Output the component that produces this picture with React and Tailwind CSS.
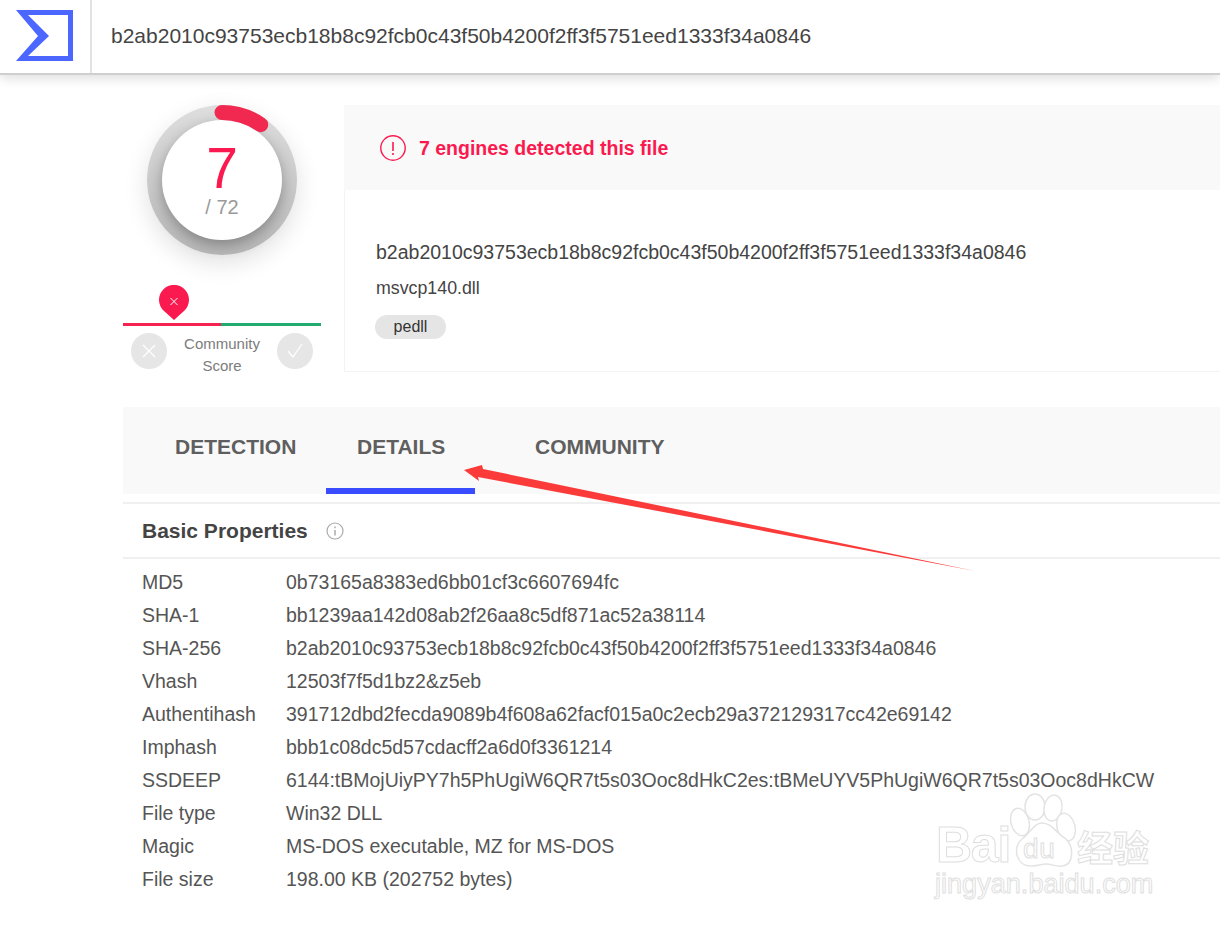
/**
 * File report page - hash header, detection score and basic properties
 */
const HASH = 'b2ab2010c93753ecb18b8c92fcb0c43f50b4200f2ff3f5751eed1333f34a0846';

const PROPERTIES = [
  ['MD5', '0b73165a8383ed6bb01cf3c6607694fc'],
  ['SHA-1', 'bb1239aa142d08ab2f26aa8c5df871ac52a38114'],
  ['SHA-256', HASH],
  ['Vhash', '12503f7f5d1bz2&z5eb'],
  ['Authentihash', '391712dbd2fecda9089b4f608a62facf015a0c2ecb29a372129317cc42e69142'],
  ['Imphash', 'bbb1c08dc5d57cdacff2a6d0f3361214'],
  ['SSDEEP', '6144:tBMojUiyPY7h5PhUgiW6QR7t5s03Ooc8dHkC2es:tBMeUYV5PhUgiW6QR7t5s03Ooc8dHkCW'],
  ['File type', 'Win32 DLL'],
  ['Magic', 'MS-DOS executable, MZ for MS-DOS'],
  ['File size', '198.00 KB (202752 bytes)'],
];

const Header = () => (
  <header className="h-[75px] flex bg-white border-b-2 border-[#cfcfcf] shadow-[0_4px_10px_rgba(0,0,0,0.12)] relative">
    <div className="w-[92px] shrink-0 border-r-2 border-[#e2e2e2] flex items-center pl-4 pb-[2px]">
      <svg width="57" height="51" viewBox="0 0 57 51">
        <path fillRule="evenodd" d="M0 0H57V51H0L22 26ZM12 5L33 26L12 46H52V5Z" fill="#4b67ff" />
      </svg>
    </div>
    <div className="pl-[19px] pb-[1px] flex items-center text-[21px] text-[#444]">{HASH}</div>
  </header>
);

const ScoreGauge = () => (
  <div className="w-[150px] h-[150px] rounded-full relative bg-gradient-to-b from-[#dedede] to-[#b8b8b8] shadow-[0_8px_24px_rgba(0,0,0,0.12)] flex items-center justify-center">
    <div className="relative w-[120px] h-[120px] rounded-full bg-white shadow-[0_5px_14px_rgba(0,0,0,0.3)] flex flex-col items-center">
      <div className="mt-[20px] text-[57px] leading-[56px] text-[#fb1a4f]">7</div>
      <div className="text-[20px] leading-[22px] text-[#9a9a9a]">/ 72</div>
    </div>
    <svg className="absolute inset-0" width="150" height="150" viewBox="0 0 150 150">
      <path d="M75 7.5A67.500 67.500 0 0 1 113.700 19.700" fill="none" stroke="#f1284f" strokeWidth="15" strokeLinecap="round" />
    </svg>
  </div>
);

const CommunityScore = () => (
  <div className="w-[198px] mt-[29px]">
    <div className="h-[39px] relative">
      <svg className="absolute left-[36px] top-[1px]" width="30" height="36" viewBox="0 0 30 36">
        <path d="M15 35L5 26A15 15 0 1 1 25 26Z" fill="#fb1a4f" />
        <path d="M11.5 13L18.5 20M18.5 13L11.5 20" stroke="#fff" strokeWidth="1" />
      </svg>
    </div>
    <div className="flex h-[3px]">
      <div className="w-[98px] bg-[#f5234f]" />
      <div className="flex-1 bg-[#21ab6f]" />
    </div>
    <div className="flex justify-between px-2 mt-2">
      <div className="w-9 h-9 mt-[-1px] rounded-full bg-[#e6e6e6] flex items-center justify-center">
        <svg width="16" height="16" viewBox="0 0 16 16">
          <path d="M2 2L14 14M14 2L2 14" stroke="#fff" strokeWidth="1.3" />
        </svg>
      </div>
      <div className="text-center text-[15px] leading-[22px] text-[#7c7c7c] mt-[-1px]">
        Community
        <br />
        Score
      </div>
      <div className="w-9 h-9 mt-[-1px] rounded-full bg-[#e6e6e6] flex items-center justify-center">
        <svg width="18" height="16" viewBox="0 0 18 16">
          <path d="M2 8L7 14L16 1" fill="none" stroke="#fff" strokeWidth="1.3" />
        </svg>
      </div>
    </div>
  </div>
);

const FileSummary = () => (
  <div className="flex-1 h-[267px] border-l border-b border-[#f3f3f3]">
    <div className="h-[85px] bg-[#f9f9f9] flex items-center pl-[36px] ml-[-1px]">
      <svg width="26" height="26" viewBox="0 0 26 26">
        <circle cx="13" cy="13" r="12.2" fill="none" stroke="#fb1a4f" strokeWidth="1.4" />
        <path d="M13 7V16M13 18V20" stroke="#fb1a4f" strokeWidth="1.6" />
      </svg>
      <span className="ml-[13px] mt-[2px] text-[19.5px] font-bold text-[#fb1a4f]">7 engines detected this file</span>
    </div>
    <div className="pl-[31px] pt-[50px] text-[#444]">
      <div className="text-[19.5px] leading-[24px]">{HASH}</div>
      <div className="mt-[12px] text-[17.8px] leading-[24px]">msvcp140.dll</div>
      <div className="mt-[15px] ml-[-1px] w-[71px] h-6 rounded-xl bg-[#e5e5e5] text-[16px] leading-6 text-center text-[#333]">pedll</div>
    </div>
  </div>
);

const Tabs = () => (
  <div className="h-[87px] mt-[30px] bg-[#f9f9f9] flex items-stretch text-[21px] font-bold text-[#5f5f5f]">
    <div className="w-[203px] pl-[52px] pt-[24px]">DETECTION</div>
    <div className="w-[149px] pl-[31px] pt-[24px] border-b-[6px] border-[#3a4cff]">DETAILS</div>
    <div className="pl-[60px] pt-[24px]">COMMUNITY</div>
  </div>
);

const BasicProperties = () => (
  <section className="mt-[8px] border-t-2 border-[#f0f0f0]">
    <div className="h-[55px] border-b-2 border-[#f0f0f0] flex items-center pl-[19px]">
      <h2 className="text-[21px] font-bold text-[#444]">Basic Properties</h2>
      <svg className="ml-[18px]" width="18" height="18" viewBox="0 0 18 18">
        <circle cx="9" cy="9" r="8" fill="none" stroke="#aaa" strokeWidth="1.2" />
        <path d="M9 8V13.5M9 4.5V6.2" stroke="#aaa" strokeWidth="1.5" />
      </svg>
    </div>
    <div className="pt-[7px]">
      {PROPERTIES.map(([label, value]) => (
        <div key={label} className="flex pl-[19px] h-[33px] items-center text-[19.5px] text-[#555]">
          <div className="w-[144px] shrink-0">{label}</div>
          <div className="whitespace-nowrap">{value}</div>
        </div>
      ))}
    </div>
  </section>
);

// screenshot annotation, drawn on top of the page
const Arrow = () => (
  <svg className="absolute left-[460px] top-[460px]" width="520" height="115" viewBox="0 0 520 115">
    <path d="M4 10L22 5L23 9L515 111L18 17L19 21Z" fill="#fb3a3a" />
  </svg>
);

const Watermark = () => (
  <div className="absolute left-[930px] top-[790px] w-[240px] h-[120px] pointer-events-none whitespace-nowrap">
    <svg className="absolute left-[78px] top-[3px]" width="70" height="80" viewBox="0 0 70 80" fill="#fff" stroke="#e3e3e3" strokeWidth="1.5">
      <ellipse cx="12" cy="29" rx="9" ry="14" transform="rotate(-15 12 29)" />
      <ellipse cx="27" cy="14" rx="10" ry="13" />
      <ellipse cx="45" cy="15" rx="9" ry="13" transform="rotate(10 45 15)" />
      <ellipse cx="58" cy="34" rx="9" ry="14" transform="rotate(-15 58 34)" />
      <path d="M34 30C26 30 22 40 14 46C4 54 8 74 24 73C30 73 34 71 38 71C44 71 48 74 54 73C66 72 66 54 58 46C48 40 44 30 34 30Z" />
    </svg>
    <div className="absolute left-[6px] top-[30px] text-[50px] leading-[50px] font-bold text-white tracking-tight [-webkit-text-stroke:1px_#dedede]">Bai</div>
    <div className="absolute left-[93px] top-[46px] text-[28px] leading-[26px] tracking-wide text-white [-webkit-text-stroke:1px_#dedede]">du</div>
    <div className="absolute left-[147px] top-[34px] text-[36px] leading-[44px] font-bold text-white [-webkit-text-stroke:1px_#dedede] [font-family:'Noto_Sans_CJK_SC',sans-serif]">经验</div>
    <div className="absolute left-[5px] top-[78px] text-[27.1px] leading-[32px] text-white [-webkit-text-stroke:1px_#e0e0e0]">jingyan.baidu.com</div>
  </div>
);

const App = () => {
  return (
    <div className="relative w-[1220px] h-[925px] overflow-hidden bg-white font-['Liberation_Sans',Arial,sans-serif]">
      <Header />
      <main className="pl-[123px] pt-[30px]">
        <div className="flex">
          <div className="w-[198px] shrink-0 flex flex-col items-center">
            <ScoreGauge />
            <CommunityScore />
          </div>
          <div className="ml-[23px] flex-1">
            <FileSummary />
          </div>
        </div>
        <Tabs />
        <BasicProperties />
      </main>
      <Arrow />
      <Watermark />
    </div>
  );
};

export default App;
